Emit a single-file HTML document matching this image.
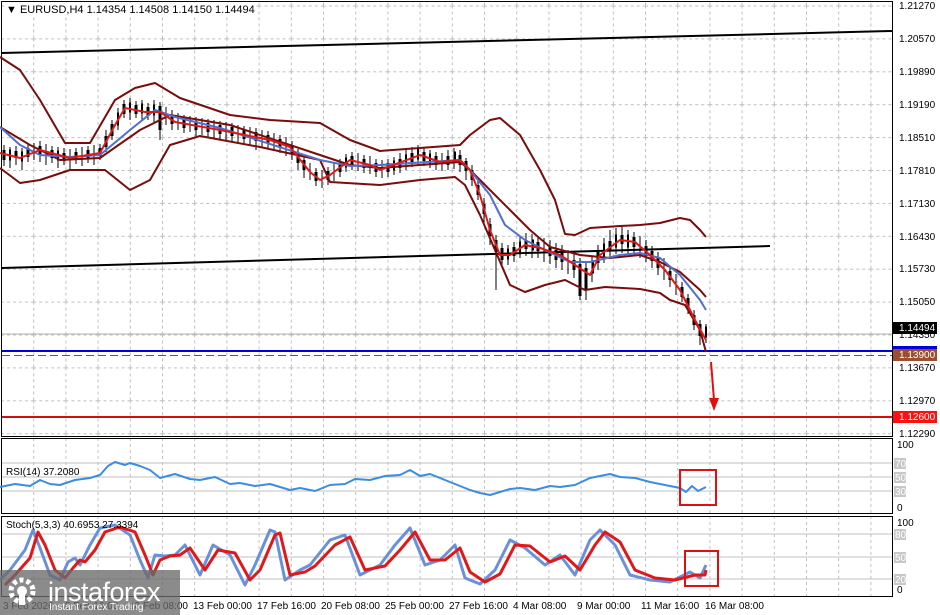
<!DOCTYPE html>
<html><head><meta charset="utf-8"><style>
html,body{margin:0;padding:0;background:#fff}
svg{display:block;font-family:"Liberation Sans",sans-serif}
</style></head><body>
<svg width="940" height="615" viewBox="0 0 940 615" xmlns="http://www.w3.org/2000/svg">
<defs>
<pattern id="gm" patternUnits="userSpaceOnUse" x="1" y="5.5" width="32.2" height="32.9">
<line x1="0.5" y1="0" x2="0.5" y2="32.9" stroke="#c0c0c0" stroke-dasharray="3,3"/>
<line x1="0" y1="0.5" x2="32.2" y2="0.5" stroke="#c0c0c0" stroke-dasharray="3,3"/>
</pattern>
<pattern id="gv" patternUnits="userSpaceOnUse" x="1" y="0" width="32.2" height="6">
<line x1="0.5" y1="0" x2="0.5" y2="3" stroke="#c0c0c0"/>
</pattern>
</defs>
<rect width="940" height="615" fill="#fff"/>
<rect x="2" y="2" width="890" height="434" fill="url(#gm)"/>
<rect x="2" y="439" width="890" height="74" fill="url(#gv)"/>
<rect x="2" y="517" width="890" height="79" fill="url(#gv)"/>
<g fill="none" stroke="#000" stroke-width="1">
<rect x="1.5" y="1.5" width="891" height="435"/>
<rect x="1.5" y="438.5" width="891" height="75"/>
<rect x="1.5" y="516.5" width="891" height="80"/>
</g>
<line x1="2" y1="53" x2="892" y2="31" stroke="#000" stroke-width="2"/>
<line x1="2" y1="268" x2="770" y2="246" stroke="#000" stroke-width="2"/>
<line x1="2" y1="351" x2="892" y2="351" stroke="#0000dd" stroke-width="2"/>
<line x1="2" y1="355.5" x2="892" y2="355.5" stroke="#8b4a2a" stroke-dasharray="8,4" stroke-width="1"/>
<line x1="2" y1="417" x2="892" y2="417" stroke="#d01010" stroke-width="2"/>
<line x1="2" y1="334" x2="892" y2="334" stroke="#b0b0b0" stroke-width="1"/>
<line x1="711" y1="362" x2="714" y2="400" stroke="#e01010" stroke-width="2"/>
<polygon points="709,398 719,398 714,411" fill="#e01010"/>
<!-- candles wicks -->
<path fill="none" stroke="#000" stroke-width="1" d="M4 145V166M10 147V168M16 146V165M22 148V170M28 144V162M34 143V160M40 141V162M46 144V165M52 146V163M58 147V168M64 148V165M70 149V170M76 148V164M82 147V166M88 146V163M94 145V165M100 144V160M106 130V152M112 120V140M118 108V130M124 100V118M130 98V120M136 101V118M142 100V121M148 103V120M154 100V124M160 102V140M166 107V125M172 110V130M178 113V130M184 115V133M190 116V132M196 117V136M202 118V135M208 119V137M214 120V138M220 121V139M226 122V140M232 123V142M238 125V143M244 126V144M250 127V145M256 128V150M262 130V147M268 131V149M274 133V151M280 135V153M286 137V156M292 141V160M298 149V170M304 156V178M310 163V180M316 168V186M322 170V188M328 167V185M334 163V181M340 159V177M346 154V172M352 152V170M358 153V171M364 155V173M370 156V174M376 159V177M382 160V178M388 159V177M394 157V175M400 153V173M406 150V170M412 147V167M418 145V165M424 148V166M430 150V168M436 152V170M442 153V171M448 150V170M454 148V169M460 150V172M466 158V180M472 165V186M478 180V200M484 198V222M490 218V245M496 235V290M502 243V265M508 245V265M514 242V262M520 236V258M526 233V256M532 234V258M538 236V258M544 238V262M550 240V264M556 243V268M562 245V270M568 250V274M574 252V278M580 258V300M586 262V300M592 256V282M598 245V270M604 238V263M610 230V257M616 228V254M622 226V253M628 230V255M634 232V255M640 236V258M646 240V262M652 246V268M658 252V275M664 258V280M670 266V287M676 274V295M682 282V302M688 294V314M694 310V330M700 320V345M706 324V343"/>
<path fill="none" stroke="#000" stroke-width="3" d="M4 150V160M16 151V158M28 148V157M40 146V154M52 150V158M64 153V161M76 152V160M88 150V158M100 148V156M106 136V147M112 124V136M124 104V114M136 105V114M148 107V116M160 106V130M172 115V124M184 119V128M196 121V130M208 123V132M220 125V134M232 127V136M244 130V139M256 132V141M268 135V144M280 139V148M292 145V154M298 153V163M304 160V170M316 172V181M328 171V180M340 163V172M352 156V165M364 159V168M376 163V172M388 163V172M400 159V168M412 153V162M424 152V161M436 156V165M448 156V165M460 155V165M466 161V171M472 170V180M478 185V195M484 204V214M490 224V236M496 240V252M502 248V260M514 247V256M526 240V249M538 242V251M550 247V256M556 250V260M562 253V262M574 260V270M580 264V296M586 268V290M598 252V263M610 241V251M622 235V244M634 237V247M646 246V256M652 251V261M658 257V268M670 271V280M682 287V297M688 298V309M694 315V325M700 324V336"/>
<path fill="none" stroke="#000" stroke-width="1" d="M9.5 150h1v10h-1zM21.5 152h1v9h-1zM57.5 151h1v9h-1zM117.5 113h1v12h-1zM129.5 103h1v9h-1zM141.5 104h1v9h-1zM153.5 105h1v10h-1zM345.5 158h1v9h-1zM393.5 161h1v9h-1zM405.5 155h1v9h-1zM417.5 149h1v10h-1zM429.5 154h1v9h-1zM454.5 152h1v10h-1zM507.5 249h1v10h-1zM519.5 242h1v10h-1zM532.5 240h1v10h-1zM592.5 261h1v12h-1zM603.5 244h1v12h-1zM615.5 235h1v12h-1zM627.5 235h1v12h-1zM705.5 327h1v10h-1z"/>
<g fill="none" stroke-linejoin="round">
<polyline stroke="#7a0c0c" stroke-width="2" points="0,57 20,70 40,100 65,143 90,143 115,100 135,88 155,83 180,98 230,115 270,120 320,123 350,140 380,151 460,145 470,135 490,120 500,118 520,135 540,170 555,200 565,234 575,235 590,228 620,226 640,225 660,223 680,218 690,220 700,230 706,237"/>
<polyline stroke="#7a0c0c" stroke-width="2" points="0,168 20,183 40,180 70,170 105,170 130,190 150,180 170,145 200,136 260,147 320,160 330,182 380,185 420,180 455,177 465,185 480,215 495,250 510,285 525,292 545,285 565,280 585,290 605,287 640,289 660,293 670,300 685,305 700,330 706,352"/>
<polyline stroke="#7a0c0c" stroke-width="2" points="0,127 30,145 60,160 100,158 140,130 170,115 230,125 320,155 350,165 380,168 460,162 470,170 490,190 510,210 530,230 550,247 580,255 610,258 640,255 660,262 680,272 700,290 706,297"/>
<polyline stroke="#5070d0" stroke-width="2" points="0,127 20,145 40,155 70,157 100,155 130,130 155,110 175,117 220,128 320,160 350,166 380,165 460,160 470,170 490,195 505,225 525,240 545,250 570,262 590,262 620,255 640,253 660,258 680,275 700,300 706,310"/>
<polyline stroke="#e01818" stroke-width="2" points="0,153 20,158 40,150 70,158 100,153 115,125 125,108 145,112 160,112 175,122 220,130 270,140 290,147 310,172 320,180 330,175 350,160 370,165 380,170 420,155 440,162 460,160 470,170 480,195 490,230 500,255 510,255 525,245 540,248 560,255 575,265 590,275 600,255 620,240 635,242 650,255 665,270 680,290 695,320 706,340"/>
</g>
<rect x="4" y="3" width="252" height="13" fill="#fff"/>
<text x="6" y="13" font-size="11" fill="#000">▼ EURUSD,H4  1.14354 1.14508 1.14150 1.14494</text>
<g font-size="10" fill="#000">
<text x="899" y="9">1.21270</text><text x="899" y="42">1.20570</text><text x="899" y="75">1.19890</text><text x="899" y="108">1.19190</text><text x="899" y="141">1.18510</text><text x="899" y="174">1.17810</text><text x="899" y="207">1.17130</text><text x="899" y="240">1.16430</text><text x="899" y="272">1.15730</text><text x="899" y="305">1.15050</text><text x="899" y="338">1.14350</text><text x="899" y="371">1.13670</text><text x="899" y="404">1.12970</text><text x="899" y="437">1.12290</text>
</g>
<rect x="893" y="322" width="44" height="12" fill="#000"/><text x="899" y="331" font-size="10" fill="#fff">1.14494</text>
<rect x="893" y="346" width="44" height="6" fill="#0000dd"/>
<rect x="893" y="349" width="44" height="12" fill="#9a5030"/><text x="899" y="358" font-size="10" fill="#fff">1.13900</text>
<rect x="893" y="411" width="44" height="12" fill="#ff1010"/><text x="899" y="420" font-size="10" fill="#fff">1.12600</text>
<g stroke="#c0c0c0" stroke-width="1"><line x1="2" y1="463" x2="892" y2="463"/><line x1="2" y1="477" x2="892" y2="477"/><line x1="2" y1="491" x2="892" y2="491"/></g>
<polyline fill="none" stroke="#3a8de0" stroke-width="2" stroke-linejoin="round" points="0,487 15,484 30,486 40,480 50,484 60,485 75,480 90,478 100,475 108,466 115,462 125,465 130,463 140,466 150,470 160,478 175,474 190,479 200,480 215,477 230,484 240,483 255,486 270,484 290,490 300,488 315,491 330,485 345,484 355,479 370,480 385,476 400,475 410,470 420,476 430,474 440,478 450,482 460,486 470,490 480,493 490,495 500,492 510,489 520,488 535,490 550,486 560,487 575,485 590,478 600,476 610,474 620,477 635,478 650,482 665,485 680,488 686,492 692,486 698,491 706,487"/>
<text x="6" y="475" font-size="10" fill="#000">RSI(14) 37.2080</text>
<rect x="680" y="470" width="36" height="35" fill="none" stroke="#e01010" stroke-width="2"/>
<g stroke="#c0c0c0" stroke-width="1"><line x1="2" y1="534" x2="892" y2="534"/><line x1="2" y1="557" x2="892" y2="557"/><line x1="2" y1="579" x2="892" y2="579"/></g>
<polyline fill="none" stroke="#6a90dc" stroke-width="3" stroke-linejoin="round" points="0,580 10,570 25,550 33,530 40,548 50,575 60,580 68,562 75,558 80,565 90,545 100,528 115,525 130,535 140,560 148,578 155,555 165,556 175,555 185,545 200,575 213,545 230,555 245,585 255,565 270,530 275,532 285,580 300,570 310,565 330,540 345,535 360,575 380,565 395,545 410,528 425,565 440,560 455,545 465,578 480,584 495,570 510,540 525,548 545,565 560,555 575,575 590,540 600,530 615,545 630,575 650,580 670,582 690,572 700,578 706,565"/>
<polyline fill="none" stroke="#e01818" stroke-width="3" stroke-linejoin="round" transform="translate(5,0)" points="0,585 10,575 25,558 33,532 40,545 50,570 60,578 68,568 75,560 80,562 90,550 100,532 115,527 130,532 140,555 148,575 155,560 165,556 175,555 185,548 200,570 213,550 230,553 245,580 255,570 270,535 275,533 285,575 300,572 310,566 330,545 345,537 360,570 380,566 395,550 410,532 425,560 440,560 455,548 465,572 480,582 495,574 510,545 525,546 545,562 560,556 575,570 590,545 600,532 615,542 630,570 650,578 670,580 690,575 700,575 701,570"/>
<text x="6" y="528" font-size="10" fill="#000">Stoch(5,3,3) 40.6953 27.3394</text>
<rect x="685" y="551" width="33" height="35" fill="none" stroke="#e01010" stroke-width="2"/>
<g font-size="10" fill="#000">
<text x="897" y="448">100</text><text x="897" y="511">0</text>
<text x="897" y="526">100</text><text x="897" y="593">0</text>
</g>
<g font-size="10" fill="#fff"><rect x="894" y="458" width="12" height="11" fill="#c8c8c8"/><text x="895" y="467">70</text>
<rect x="894" y="472" width="12" height="11" fill="#c8c8c8"/><text x="895" y="481">50</text>
<rect x="894" y="486" width="12" height="11" fill="#c8c8c8"/><text x="895" y="495">30</text>
<rect x="894" y="529" width="12" height="11" fill="#c8c8c8"/><text x="895" y="538">80</text>
<rect x="894" y="552" width="12" height="11" fill="#c8c8c8"/><text x="895" y="561">50</text>
<rect x="894" y="574" width="12" height="11" fill="#c8c8c8"/><text x="895" y="583">20</text></g>
<g font-size="10" fill="#000">
<text x="3" y="609">3 Feb 2026</text><text x="65" y="609">5 Feb 16:00</text><text x="129" y="609">10 Feb 08:00</text>
<text x="193" y="609">13 Feb 00:00</text><text x="257" y="609">17 Feb 16:00</text><text x="321" y="609">20 Feb 08:00</text>
<text x="385" y="609">25 Feb 00:00</text><text x="449" y="609">27 Feb 16:00</text><text x="513" y="609">4 Mar 08:00</text>
<text x="577" y="609">9 Mar 00:00</text><text x="641" y="609">11 Mar 16:00</text><text x="705" y="609">16 Mar 08:00</text>
</g>
<rect x="0" y="570" width="180" height="45" fill="#6a6a6a" opacity="0.78"/>
<g fill="#fff">
<circle cx="22" cy="591" r="11" fill="none" stroke="#fff" stroke-width="5" stroke-dasharray="4,3"/>
<circle cx="22" cy="591" r="5"/>
<rect x="19" y="591" width="6" height="14"/>
<text x="48" y="601" font-size="27" letter-spacing="-0.5">instaforex</text>
<text x="49" y="610" font-size="10">Instant Forex Trading</text>
</g>
</svg>
</body></html>
